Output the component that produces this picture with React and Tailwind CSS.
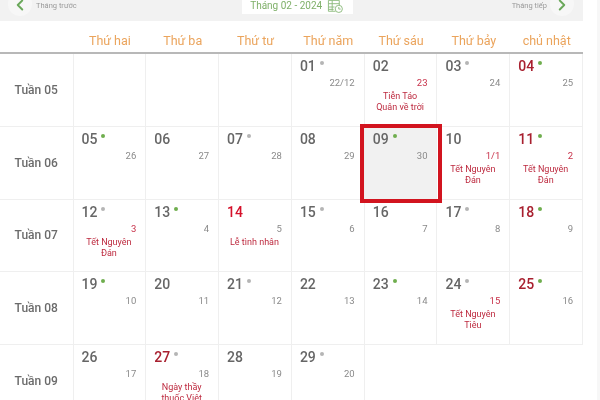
import React from 'react';
import { ChevronLeft, ChevronRight } from 'lucide-react';

const dayNames = ['Thứ hai', 'Thứ ba', 'Thứ tư', 'Thứ năm', 'Thứ sáu', 'Thứ bảy', 'chủ nhật'];

const weeks = [
  {
    label: 'Tuần 05',
    days: [
      null,
      null,
      null,
      { d: '01', dot: 'gray', lunar: '22/12' },
      { d: '02', lunar: '23', lunarRed: true, event: ['Tiễn Táo', 'Quân về trời'] },
      { d: '03', dot: 'gray', lunar: '24' },
      { d: '04', red: true, dot: 'green', lunar: '25' },
    ],
  },
  {
    label: 'Tuần 06',
    days: [
      { d: '05', dot: 'green', lunar: '26' },
      { d: '06', lunar: '27' },
      { d: '07', dot: 'gray', lunar: '28' },
      { d: '08', lunar: '29' },
      { d: '09', dot: 'green', lunar: '30', today: true },
      { d: '10', lunar: '1/1', lunarRed: true, event: ['Tết Nguyên', 'Đán'] },
      { d: '11', red: true, dot: 'green', lunar: '2', lunarRed: true, event: ['Tết Nguyên', 'Đán'] },
    ],
  },
  {
    label: 'Tuần 07',
    days: [
      { d: '12', dot: 'gray', lunar: '3', lunarRed: true, event: ['Tết Nguyên', 'Đán'] },
      { d: '13', dot: 'green', lunar: '4' },
      { d: '14', bright: true, lunar: '5', event: ['Lễ tình nhân'] },
      { d: '15', dot: 'gray', lunar: '6' },
      { d: '16', lunar: '7' },
      { d: '17', dot: 'gray', lunar: '8' },
      { d: '18', red: true, dot: 'green', lunar: '9' },
    ],
  },
  {
    label: 'Tuần 08',
    days: [
      { d: '19', dot: 'green', lunar: '10' },
      { d: '20', lunar: '11' },
      { d: '21', dot: 'gray', lunar: '12' },
      { d: '22', lunar: '13' },
      { d: '23', dot: 'green', lunar: '14' },
      { d: '24', dot: 'gray', lunar: '15', lunarRed: true, event: ['Tết Nguyên', 'Tiêu'] },
      { d: '25', red: true, dot: 'green', lunar: '16' },
    ],
  },
  {
    label: 'Tuần 09',
    days: [
      { d: '26', lunar: '17' },
      { d: '27', red: true, dot: 'gray', lunar: '18', event: ['Ngày thầy', 'thuốc Việt'] },
      { d: '28', lunar: '19' },
      { d: '29', dot: 'gray', lunar: '20' },
    ],
  },
];

function CalendarIcon() {
  return (
    <svg width="17" height="14" viewBox="0 0 18 14" fill="none" stroke="#8dbb7d" strokeWidth="1">
      <path d="M9 11.5H1.5V0H13V5" />
      <path d="M1.5 3.5H13M1.5 7H8M1.5 9.5H7M5.5 0V11" />
      <circle cx="12.5" cy="9" r="3.8" />
      <path d="M12.5 7V9.2H14.5" />
    </svg>
  );
}

function DayCell({ day }) {
  let numColor = 'text-[#666666]';
  if (day.red) numColor = 'text-[#a8202f]';
  if (day.bright) numColor = 'text-[#d5112b]';

  return (
    <div className={`relative border-r border-b border-[#efefef] pt-[3px] pr-[9px] pl-[8px] ${day.today ? 'bg-[#f1f1f1]' : ''}`}>
      {day.today && <div className="absolute -top-[3px] -right-[6px] -bottom-[4px] -left-[5px] z-10 border-4 border-[#d2141f]" />}
      <div className="flex h-[19px] items-start">
        <span className={`text-[14px] leading-[18px] font-medium ${numColor}`}>{day.d}</span>
        {day.dot && (
          <span className={`mt-[4px] ml-[4px] h-[4px] w-[4px] rounded-full ${day.dot === 'green' ? 'bg-[#6fae4e]' : 'bg-[#b5b5b5]'}`} />
        )}
      </div>
      <div className={`h-[13px] text-right text-[9.5px] leading-[13px] ${day.lunarRed ? 'text-[#c8324a]' : 'text-[#8a8a8a]'}`}>
        {day.lunar}
      </div>
      {day.event && (
        <div className="-mx-[6px] mt-[2px] text-center text-[9px] leading-[11px] text-[#bd2a3f]">
          {day.event.map((line) => (
            <div key={line}>{line}</div>
          ))}
        </div>
      )}
    </div>
  );
}

export default function App() {
  return (
    <div className="flex h-[400px] w-[600px] overflow-hidden bg-white font-['Roboto',sans-serif] blur-[0.35px]">
      <div className="w-[583px] shrink-0">
        <div className="flex h-[21px] items-start justify-between bg-[#f2f2f2] pr-[9px] pl-[8px]">
          <div className="flex items-center">
            <div className="-mt-[8px] flex h-[24px] w-[24px] items-center justify-center rounded-full bg-[#f7f7f7]">
              <ChevronLeft size={18} strokeWidth={2.5} className="mt-[2px] text-[#6aa85a]" />
            </div>
            <span className="-mt-[4px] ml-[4px] text-[7.5px] leading-[10px] text-[#9a9a9a]">Tháng trước</span>
          </div>
          <div className="ml-[6px] flex h-[14px] w-[111px] items-center justify-center gap-[5px] overflow-hidden bg-white">
            <span className="-mt-[3px] text-[10px] leading-[12px] text-[#7fb069]">Tháng 02 - 2024</span>
            <CalendarIcon />
          </div>
          <div className="flex items-center">
            <span className="-mt-[4px] mr-[3px] text-[7.5px] leading-[10px] text-[#9a9a9a]">Tháng tiếp</span>
            <div className="-mt-[8px] flex h-[24px] w-[24px] items-center justify-center rounded-full bg-[#f7f7f7]">
              <ChevronRight size={18} strokeWidth={2.5} className="mt-[2px] text-[#6aa85a]" />
            </div>
          </div>
        </div>

        <div className="grid h-[33px] grid-cols-[73.5px_repeat(7,72.8px)] items-center border-b-2 border-[#b8b8b8] pt-[9px]">
          <div />
          {dayNames.map((name) => (
            <div key={name} className="text-center text-[12.5px] text-[#eba45c]">
              {name}
            </div>
          ))}
        </div>

        {weeks.map((week) => (
          <div key={week.label} className="grid h-[72.75px] grid-cols-[73.5px_repeat(7,72.8px)]">
            <div className="flex items-center justify-center border-r border-b border-[#efefef] text-[12px] font-medium text-[#6b6b6b]">
              {week.label}
            </div>
            {week.days.map((day, i) => (day ? <DayCell key={day.d} day={day} /> : <div key={i} className="border-r border-b border-[#efefef]" />))}
          </div>
        ))}
      </div>
      <div className="ml-auto w-[3px] bg-[#f7f7f7]" />
    </div>
  );
}
